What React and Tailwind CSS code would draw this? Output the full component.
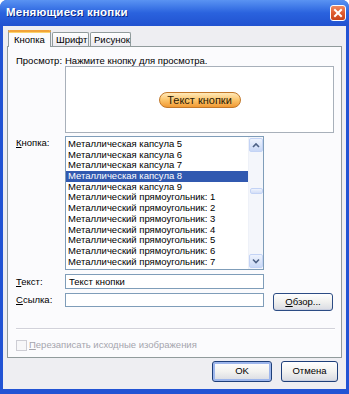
import React from "react";

const F = { fontFamily: '"Liberation Sans", Arial, sans-serif' };

function ScrollBtn({ dir }) {
  return (
    <div className="w-[14px] h-[14px] rounded-[2px] border border-[#c3d3f5] bg-gradient-to-b from-[#eef3fd] to-[#c9d8f6] flex items-center justify-center">
      <svg width="8" height="6" viewBox="0 0 8 6">
        {dir === "up" ? (
          <path d="M1 5 L4 2 L7 5" fill="none" stroke="#4d6185" strokeWidth="1.6" />
        ) : (
          <path d="M1 1.5 L4 4.5 L7 1.5" fill="none" stroke="#4d6185" strokeWidth="1.6" />
        )}
      </svg>
    </div>
  );
}

export default function App() {
  const items = [
    "Металлическая капсула 5",
    "Металлическая капсула 6",
    "Металлическая капсула 7",
    "Металлическая капсула 8",
    "Металлическая капсула 9",
    "Металлический прямоугольник: 1",
    "Металлический прямоугольник: 2",
    "Металлический прямоугольник: 3",
    "Металлический прямоугольник: 4",
    "Металлический прямоугольник: 5",
    "Металлический прямоугольник: 6",
    "Металлический прямоугольник: 7",
  ];
  return (
    <div className="w-[349px] h-[394px] bg-white" style={F}>
      <div className="w-[349px] h-[394px] rounded-t-[7px] bg-[#2253d4] flex flex-col overflow-hidden">
        {/* Title bar */}
        <div className="h-[26px] flex items-center bg-gradient-to-b from-[#5a93f2] via-[#2a62de] to-[#2152d0] px-[6px]">
          <div
            className="text-white font-bold text-[11.5px] tracking-[0.2px] flex-1"
            style={{ textShadow: "1px 1px 0 #0c2a86" }}
          >
            Меняющиеся кнопки
          </div>
          <div className="w-[16px] h-[16px] mr-[-3px] rounded-[3px] border border-white bg-gradient-to-b from-[#f08a62] via-[#df5b2f] to-[#c7431b] flex items-center justify-center">
            <svg width="10" height="10" viewBox="0 0 10 10">
              <path d="M2 2 L8 8 M8 2 L2 8" stroke="white" strokeWidth="2" strokeLinecap="square" />
            </svg>
          </div>
        </div>
        {/* Body */}
        <div className="ml-[3px] mr-[3px] h-[363px] bg-[#eeeef2] flex flex-col">
          {/* Tabs */}
          <div className="mt-[4px] ml-[5px] h-[16px] flex items-end text-[9.5px] text-black">
            <div className="relative z-10 -mb-px w-[43px] h-[17px] bg-[#fbfbfd] border-l border-r border-[#919b9c] flex flex-col">
              <div className="h-[2px] bg-[#f2a43a] -mx-px rounded-t-[2px]" />
              <div className="h-px bg-[#fcd26a]" />
              <div className="flex-1 flex items-center pl-[5px] leading-[12px]">Кнопка</div>
            </div>
            <div className="w-[37px] h-[14px] ml-px border border-b-0 border-[#919b9c] rounded-t-[2px] bg-gradient-to-b from-white to-[#ebeaf0] flex items-center pl-[3px] leading-[12px]">
              Шрифт
            </div>
            <div className="w-[41px] h-[14px] ml-px border border-b-0 border-[#919b9c] rounded-t-[2px] bg-gradient-to-b from-white to-[#ebeaf0] flex items-center pl-[3px] leading-[12px]">
              Рисунок
            </div>
          </div>
          {/* Panel */}
          <div className="ml-[4px] w-[335px] h-[312px] border border-[#919b9c] bg-[#fbfbfd] flex flex-col text-[9.5px] text-black">
            <div className="mt-[8px] ml-[8px] h-[11px] flex items-center">
              <div className="w-[49px] leading-[11px]">Просмотр:</div>
              <div className="leading-[11px]">Нажмите кнопку для просмотра.</div>
            </div>
            <div className="ml-[57px] w-[269px] h-[67px] border border-[#a8b0ba] bg-white flex items-center justify-center">
              <div className="w-[82px] h-[16px] rounded-full border border-[#c2782a] bg-gradient-to-b from-[#ffe9b8] via-[#fbc46a] to-[#f19a32] flex items-center justify-center text-[11px] text-[#2a1a05] leading-[14px]">
                Текст кнопки
              </div>
            </div>
            {/* List row */}
            <div className="mt-[3px] ml-[8px] h-[134px] flex">
              <div className="w-[49px] pt-[1px] leading-[12px]">
                <span className="underline">К</span>нопка:
              </div>
              <div className="w-[199px] h-[134px] border border-[#7f9db9] bg-white flex overflow-hidden">
                <div className="w-[183px] pt-[2px] overflow-hidden">
                  {items.map((t, i) => (
                    <div
                      key={i}
                      className={
                        "h-[10.7px] leading-[10.7px] pl-[2px] whitespace-nowrap " +
                        (i === 3 ? "bg-[#3159b0] text-white" : "")
                      }
                    >
                      {t}
                    </div>
                  ))}
                </div>
                <div className="w-[15px] bg-[#f4f6fb] border-l border-[#eef1f8] flex flex-col items-center py-px">
                  <ScrollBtn dir="up" />
                  <div className="flex-1 w-full flex flex-col items-center">
                    <div className="h-[36px]" />
                    <div className="w-[13px] h-[6px] rounded-[2px] border border-[#c3d3f5] bg-gradient-to-b from-[#eef3fd] to-[#d3def7]" />
                  </div>
                  <ScrollBtn dir="down" />
                </div>
              </div>
            </div>
            {/* Text row */}
            <div className="mt-[4px] ml-[8px] h-[15px] flex items-center">
              <div className="w-[49px] leading-[12px]">
                <span className="underline">Т</span>екст:
              </div>
              <div className="w-[199px] h-[15px] border border-[#7f9db9] bg-white flex items-center pl-[3px] leading-[12px]">
                Текст кнопки
              </div>
            </div>
            {/* Link row */}
            <div className="mt-[4px] ml-[8px] h-[18px] flex items-start">
              <div className="w-[49px] leading-[11px] pt-[1px]">
                <span className="underline">С</span>сылка:
              </div>
              <div className="w-[199px] h-[14px] border border-[#7f9db9] bg-white" />
              <div className="ml-[9px] w-[60px] h-[18px] rounded-[3px] border border-[#2c4c84] bg-gradient-to-b from-white via-[#f0f0ee] to-[#d9dbe3] flex items-center justify-center leading-[12px] shadow-[inset_0_-1px_0_#c9cfdf]">
                <span><span className="underline">О</span>бзор...</span>
              </div>
            </div>
            {/* Separator */}
            <div className="mt-[17px] ml-[8px] w-[319px] h-px bg-[#d2d2da]" />
            <div className="ml-[8px] w-[319px] h-px bg-white" />
            {/* Checkbox */}
            <div className="mt-[9px] ml-[8px] h-[12px] flex items-center">
              <div className="w-[11px] h-[11px] border border-[#cdcdd4] bg-[#f7f7f9]" />
              <div className="ml-[2px] text-[#a5a5ad] leading-[12px]">
                <span className="underline">П</span>ерезаписать исходные изображения
              </div>
            </div>
          </div>
          {/* Buttons */}
          <div className="mt-[3px] flex text-[9.5px] text-black">
            <div className="ml-[209px] w-[60px] h-[21px] rounded-[3px] border border-[#1e3f7a] bg-gradient-to-b from-white via-[#f2f2f0] to-[#d8dae2] flex items-center justify-center shadow-[inset_0_0_0_2px_#9db6ec]">
              OK
            </div>
            <div className="ml-[9px] w-[57px] h-[21px] rounded-[3px] border border-[#1e3f7a] bg-gradient-to-b from-white via-[#f2f2f0] to-[#d8dae2] flex items-center justify-center shadow-[inset_0_-1px_0_#c9cfdf]">
              Отмена
            </div>
          </div>
        </div>
      </div>
    </div>
  );
}
